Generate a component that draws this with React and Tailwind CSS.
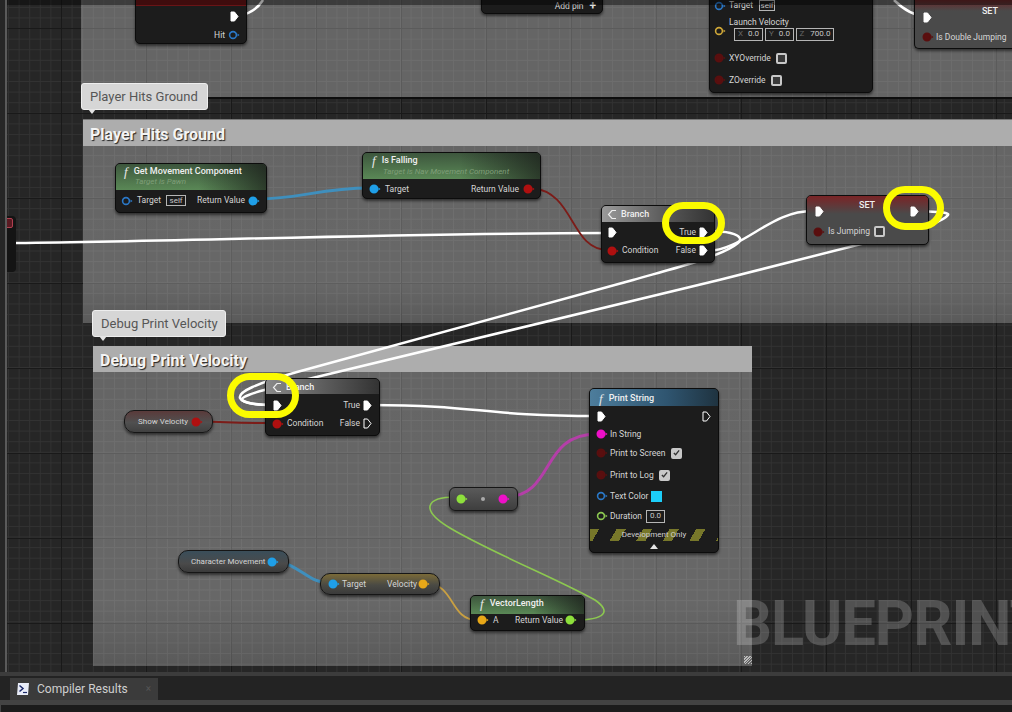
import React from 'react'

const grid =
  '[background-image:linear-gradient(90deg,#191919_1px,transparent_1px),linear-gradient(0deg,#191919_1px,transparent_1px),linear-gradient(90deg,#323232_1px,transparent_1px),linear-gradient(0deg,#323232_1px,transparent_1px)] [background-size:85px_85px,85px_85px,10.6px_10.6px,10.6px_10.6px] [background-position:59px_0,0_29px,59px_0,0_29px]'

function Exec({ hollow }) {
  return (
    <svg width="9" height="11" viewBox="0 0 9 11" className="shrink-0">
      <path d="M1 1h3.5L8 5.5 4.500 10H1z" fill={hollow ? 'none' : '#fff'} stroke="#fff" strokeWidth="1" />
    </svg>
  )
}

function Pin({ color, hollow }) {
  return (
    <svg width="12" height="10" viewBox="0 0 12 10" className="shrink-0">
      <circle cx="5" cy="5" r={hollow ? 3.4 : 3.7} fill={hollow ? 'none' : color} stroke={color} strokeWidth="1.6" />
      <path d="M9.500 3.500 11.500 5 9.500 6.500z" fill={color} />
    </svg>
  )
}

function Check({ on }) {
  return (
    <span className="flex h-[11px] w-[11px] shrink-0 items-center justify-center rounded-[2px] border-2 border-[#c8c8c8] bg-[#3a3a3a]">
      {on && (
        <svg width="8" height="8" viewBox="0 0 8 8" className="bg-[#c8c8c8]">
          <path d="M1 4l2 2 4-5" fill="none" stroke="#333" strokeWidth="1.5" />
        </svg>
      )}
    </span>
  )
}

function Field({ children, className = '' }) {
  return (
    <span className={`flex items-center justify-center border border-[#b5b5b5] text-[8px] leading-none text-[#c8c8c8] ${className}`}>
      {children}
    </span>
  )
}

function Fn({ className = '' }) {
  return <span className={`font-['Liberation_Serif',serif] text-[13px] italic leading-none text-[#e8e8e8] ${className}`}>f</span>
}

function BranchIcon() {
  return (
    <svg width="11" height="11" viewBox="0 0 11 11" className="shrink-0">
      <path d="M9 1.500H5L1.500 5.500 5 9.500H9" fill="none" stroke="#eee" strokeWidth="1.2" />
    </svg>
  )
}

function Row({ children, className = '' }) {
  return <div className={`flex items-center text-[8.500px] leading-none text-[#d5d5d5] ${className}`}>{children}</div>
}

const nodeBase =
  "absolute overflow-hidden rounded-[5px] border border-[#0c0c0c] bg-[#1c1c1c] font-['Roboto',sans-serif] shadow-[0_2px_3px_rgba(0,0,0,0.55)]"
const pureBase =
  "absolute flex items-center overflow-hidden border border-[#161616] font-['Roboto',sans-serif] shadow-[0_2px_3px_rgba(0,0,0,0.55)]"
const titleText = 'text-[9px] font-medium leading-none text-[#f0f0f0]'

function Comment({ className, title }) {
  return (
    <div className={`absolute bg-[linear-gradient(180deg,rgba(255,255,255,0.29),rgba(255,255,255,0.3)_80%,rgba(255,255,255,0.24))] ${className}`}>
      <div className="flex h-[26px] items-center bg-[#adadad] pl-[7px] pt-[3px] font-['Roboto',sans-serif] text-[16px] font-bold text-[#f4f4f4] [text-shadow:1px_1px_1px_#222]">
        {title}
      </div>
    </div>
  )
}

function Bubble({ className, children }) {
  return (
    <div className={`absolute flex h-[27px] items-center rounded-[3px] border border-[#eeeeee] bg-[#d6d6d6] pl-[8px] font-['Roboto',sans-serif] text-[13px] text-[#565656] ${className}`}>
      {children}
      <span className="absolute left-[6px] top-[25px] h-0 w-0 border-x-[4px] border-t-[5px] border-x-transparent border-t-[#e4e4e4]" />
    </div>
  )
}

function Wires() {
  return (
    <svg className="absolute left-0 top-0" width="1012" height="672" viewBox="0 0 1012 672" fill="none">
      <path d="M238 16C250 14 258 8 263 0" stroke="#fff" strokeWidth="2.500" />
      <path d="M894 0C902 8 912 16 926 16" stroke="#fff" strokeWidth="2.500" />
      <path d="M16 243C200 241 400 233 606 233" stroke="#fff" strokeWidth="2.500" />
      <path d="M258 199C300 199 320 188 370 188" stroke="#3f8fbd" strokeWidth="3" />
      <path d="M532 188C575 192 570 250 608 250" stroke="#7c1c18" strokeWidth="1.800" />
      <path d="M707 232C730 230 746 236 738 243C720 258 660 272 633 280L297 372C255 384 238 392 240 398C242 403 258 405 274 405" stroke="#fff" strokeWidth="2.500" />
      <path d="M707 251C745 250 770 210 814 211" stroke="#fff" strokeWidth="2.500" />
      <path d="M918 211C935 212 950 212 948 215C942 224 900 234 885 238L719 280L300 381C262 390 240 396 242 400C246 404 258 405 274 405" stroke="#fff" strokeWidth="2.500" />
      <path d="M200 421C230 423 250 423 275 423" stroke="#7c1c18" strokeWidth="2" />
      <path d="M371 405C480 405 480 416 597 416" stroke="#fff" strokeWidth="2.500" />
      <path d="M507 497C555 495 540 434 597 434" stroke="#b43fa8" strokeWidth="3" />
      <path d="M456 497C425 497 420 510 450 528C490 552 560 580 595 600C612 612 605 620 574 620" stroke="#8cc850" strokeWidth="1.600" />
      <path d="M278 561C300 566 310 583 328 583" stroke="#3f8fbd" strokeWidth="3" />
      <path d="M427 583C455 585 450 620 477 620" stroke="#c9a042" strokeWidth="1.800" />
    </svg>
  )
}

function GreenHead({ children, className = '' }) {
  return (
    <div className={`bg-[linear-gradient(90deg,transparent_55%,rgba(20,20,20,0.65)),linear-gradient(180deg,#3d563d,#5a8856)] ${className}`}>
      {children}
    </div>
  )
}

function Nodes() {
  return (
    <>
      {/* left edge node, mostly off screen */}
      <div className="absolute left-[6px] top-[216px] h-[56px] w-[10px] rounded-r-[4px] bg-[#141414]" />
      <div className="absolute left-[5px] top-[218px] h-[10px] w-[8px] rounded-[2px] border border-[#b04050] bg-[#5a1a22]" />

      {/* top row, cut by the window */}
      <div className={`${nodeBase} left-[135px] top-[-20px] h-[64px] w-[112px]`}>
        <div className="h-[25px] bg-[#6a1416]" />
        <Row className="mt-[5px] justify-end pr-[7px]"><Exec /></Row>
        <Row className="mt-[8px] justify-end gap-[3px] pr-[6px]">Hit <Pin color="#2a78c8" hollow /></Row>
      </div>
      <div className={`${nodeBase} left-[481px] top-[-20px] h-[34px] w-[122px]`}>
        <Row className="mt-[21px] justify-end gap-[6px] pr-[6px] text-[#aaa]">
          Add pin <span className="text-[12px] font-bold leading-[8px] text-[#ddd]">+</span>
        </Row>
      </div>
      <div className={`${nodeBase} left-[709px] top-[-10px] h-[103px] w-[164px] pl-[4px]`}>
        <Row className="mt-[9px] gap-[3px] text-[#aaa]"><Pin color="#2a78c8" hollow />Target <Field className="ml-[3px] h-[11px] w-[16px] text-[7px]">self</Field></Row>
        <Row className="ml-[15px] mt-[7px]">Launch Velocity</Row>
        <Row className="mt-[1px]">
          <span className="mr-[8px] -translate-y-[3px]"><Pin color="#d0a838" hollow /></span>
          <span className="flex gap-[2px]">
            <Field className="h-[13px] w-[29px] gap-[5px]"><i className="not-italic text-[#666]">X</i>0.0</Field>
            <Field className="h-[13px] w-[29px] gap-[5px]"><i className="not-italic text-[#666]">Y</i>0.0</Field>
            <Field className="h-[13px] w-[38px] gap-[6px]"><i className="not-italic text-[#666]">Z</i>700.0</Field>
          </span>
        </Row>
        <Row className="mt-[12px] gap-[3px]"><Pin color="#5a0f0f" />XYOverride <span className="ml-[2px]"><Check /></span></Row>
        <Row className="mt-[11px] gap-[3px]"><Pin color="#5a0f0f" />ZOverride <span className="ml-[2px]"><Check /></span></Row>
      </div>
      <div className={`${nodeBase} left-[914px] top-[-20px] h-[69px] w-[110px] rounded-r-none border-r-0 bg-[#4a4a4a]`}>
        <div className="h-[30px] bg-[linear-gradient(180deg,#6c2426_60%,#4a4a4a)]" />
        <div className="flex h-[19px] items-start justify-between pl-[8px] pr-[26px] text-[9px] font-medium leading-none text-[#eee]">
          <span className="mt-[1px]"><Exec /></span><span className="-translate-y-[4px]">SET</span>
        </div>
        <Row className="mt-[2px] gap-[2px] pl-[7px]"><Pin color="#5a0f0f" />Is Double Jumping</Row>
      </div>

      {/* Player Hits Ground */}
      <div className={`${nodeBase} left-[115px] top-[163px] h-[50px] w-[152px]`}>
        <GreenHead className="h-[26px] pl-[8px] pt-[1px]">
          <div className="flex items-center gap-[6px]"><Fn /><span className={titleText}>Get Movement Component</span></div>
          <div className="ml-[11px] text-[8px] italic leading-none text-[#7f9f78]">Target is Pawn</div>
        </GreenHead>
        <Row className="justify-between pl-[5px] pr-[6px] pt-[5px]">
          <span className="flex items-center gap-[4px]"><Pin color="#2a78c8" hollow />Target <Field className="ml-[1px] h-[11px] w-[20px]">self</Field></span>
          <span className="flex items-center gap-[3px]">Return Value <Pin color="#1f9fe8" /></span>
        </Row>
      </div>
      <div className={`${nodeBase} left-[362px] top-[152px] h-[47px] w-[179px]`}>
        <GreenHead className="h-[26px] pl-[9px] pt-[1px]">
          <div className="flex items-center gap-[6px]"><Fn /><span className={titleText}>Is Falling</span></div>
          <div className="ml-[11px] mt-[1px] text-[8px] italic leading-none text-[#7f9f78]">Target is Nav Movement Component</div>
        </GreenHead>
        <Row className="justify-between pl-[6px] pr-[5px] pt-[5px]">
          <span className="flex items-center gap-[4px]"><Pin color="#1f9fe8" />Target</span>
          <span className="flex items-center gap-[4px]">Return Value <Pin color="#b01010" /></span>
        </Row>
      </div>
      <div className={`${nodeBase} left-[601px] top-[205px] h-[58px] w-[114px]`}>
        <div className="flex h-[16px] items-center gap-[3px] bg-[linear-gradient(90deg,#9a9a9a,#555_60%,#333)] pl-[5px]">
          <BranchIcon /><span className={titleText}>Branch</span>
        </div>
        <Row className="justify-between pl-[6px] pr-[6px] pt-[5px]"><Exec /><span className="flex items-center gap-[3px]">True <Exec /></span></Row>
        <Row className="justify-between pl-[5px] pr-[6px] pt-[7px]">
          <span className="flex items-center gap-[3px]"><Pin color="#b01010" />Condition</span>
          <span className="flex items-center gap-[3px]">False <Exec /></span>
        </Row>
      </div>
      <div className={`${nodeBase} left-[806px] top-[195px] h-[50px] w-[123px] bg-[#4a4a4a]`}>
        <div className="absolute left-0 right-0 top-0 h-[18px] bg-[linear-gradient(180deg,#7a2426,#4a4a4a)]" />
        <div className="relative flex justify-between pl-[8px] pr-[9px] pt-[10px]">
          <Exec /><span className="absolute left-[52px] top-[5px] text-[9px] font-medium leading-none text-[#eee]">SET</span><Exec />
        </div>
        <Row className="relative gap-[3px] pl-[6px] pt-[9px]"><Pin color="#5a0f0f" />Is Jumping <span className="ml-[1px]"><Check /></span></Row>
      </div>

      {/* Debug Print Velocity */}
      <div className={`${pureBase} left-[124px] top-[410px] h-[23px] w-[89px] justify-between rounded-[10px] bg-[linear-gradient(180deg,#5a3a3a,#505050_55%,#404040)] pl-[13px] pr-[9px]`}>
        <span className="text-[8px] text-[#d5d5d5]">Show Velocity</span><Pin color="#b01010" />
      </div>
      <div className={`${nodeBase} left-[265px] top-[378px] h-[58px] w-[115px]`}>
        <div className="flex h-[15px] items-center gap-[3px] bg-[linear-gradient(90deg,#8a8a8a,#555_60%,#333)] pl-[6px] pt-[1px]">
          <BranchIcon /><span className={titleText}>Branch</span>
        </div>
        <Row className="justify-between pl-[7px] pr-[7px] pt-[6px]"><Exec /><span className="flex items-center gap-[3px]">True <Exec /></span></Row>
        <Row className="justify-between pl-[6px] pr-[7px] pt-[7px]">
          <span className="flex items-center gap-[3px]"><Pin color="#b01010" />Condition</span>
          <span className="flex items-center gap-[3px]">False <Exec hollow /></span>
        </Row>
      </div>
      <div className={`${nodeBase} left-[589px] top-[388px] h-[165px] w-[130px]`}>
        <div className="flex h-[17px] items-center gap-[6px] bg-[linear-gradient(90deg,#4d7d9c,#2f5570_60%,#1f3340)] pl-[9px] pt-[1px]">
          <Fn /><span className={titleText}>Print String</span>
        </div>
        <Row className="justify-between pl-[7px] pr-[7px] pt-[5px]"><Exec /><Exec hollow /></Row>
        <div className="mt-[7px] flex flex-col pl-[6px]">
          <Row className="h-[10px] gap-[2px]"><Pin color="#ee10c8" />In String</Row>
          <Row className="mt-[9px] h-[10px] gap-[2px]"><Pin color="#5a0f0f" />Print to Screen <span className="ml-[3px]"><Check on /></span></Row>
          <Row className="mt-[12px] h-[10px] gap-[2px]"><Pin color="#5a0f0f" />Print to Log <span className="ml-[3px]"><Check on /></span></Row>
          <Row className="mt-[11px] h-[10px] gap-[2px]"><Pin color="#2a78c8" hollow />Text Color <span className="ml-px h-[11px] w-[11px] bg-[#1ccdf8]" /></Row>
          <Row className="mt-[10px] h-[10px] gap-[2px]"><Pin color="#8cc850" hollow />Duration <Field className="ml-[2px] h-[13px] w-[19px]">0.0</Field></Row>
        </div>
        <div className="mt-[8px] flex h-[12px] items-center justify-center bg-[repeating-linear-gradient(120deg,#77772a_0_8px,#1c1c1c_8px_23px)] text-[8px] text-[#d0d0d0]">
          Development Only
        </div>
        <div className="mx-auto mt-[3px] h-0 w-0 border-x-[4px] border-b-[5px] border-x-transparent border-b-[#e5e5e5]" />
      </div>
      <div className={`${pureBase} left-[449px] top-[487px] h-[24px] w-[69px] justify-between rounded-[6px] bg-[linear-gradient(180deg,#5a5a5a,#3e3e3e)] pl-[6px] pr-[7px]`}>
        <Pin color="#8ee03c" />
        <span className="h-[4px] w-[4px] rounded-full bg-[#aaa]" />
        <Pin color="#ee10c8" />
      </div>
      <div className={`${pureBase} left-[178px] top-[550px] h-[23px] w-[111px] justify-between rounded-[10px] bg-[linear-gradient(180deg,#3a4e5a,#4a4a4a_60%,#3a3a3a)] pl-[12px] pr-[9px]`}>
        <span className="text-[8px] text-[#d5d5d5]">Character Movement</span><Pin color="#1f9fe8" />
      </div>
      <div className={`${pureBase} left-[320px] top-[573px] h-[22px] w-[120px] justify-between rounded-[10px] bg-[linear-gradient(180deg,#7a6a38,#4a4a44_55%,#3a3a3a)] pl-[7px] pr-[9px]`}>
        <span className="flex items-center gap-[2px] text-[8.500px] text-[#d5d5d5]"><Pin color="#1f9fe8" />Target</span>
        <span className="flex items-center gap-[1px] text-[8.500px] text-[#d5d5d5]">Velocity <Pin color="#e8a818" /></span>
      </div>
      <div className={`${nodeBase} left-[470px] top-[595px] h-[36px] w-[115px]`}>
        <GreenHead className="flex h-[18px] items-center gap-[6px] pb-[3px] pl-[9px]"><Fn /><span className={titleText}>VectorLength</span></GreenHead>
        <Row className="justify-between pl-[6px] pr-[7px] pt-[1px]">
          <span className="flex items-center gap-[4px]"><Pin color="#e8a818" />A</span>
          <span className="flex items-center gap-[2px]">Return Value <Pin color="#8ee03c" /></span>
        </Row>
      </div>
    </>
  )
}

export default function App() {
  return (
    <div className="flex h-[712px] w-[1012px] flex-col overflow-hidden bg-[#262626]">
      <div className="relative ml-[5px] h-[672px] w-full shrink-0 overflow-hidden border-l-2 border-[#5a5a5a] bg-[#262626]">
        <div className={`absolute inset-0 left-[-5px] ${grid}`} />
        <div className="absolute inset-0 left-[-7px] w-[1012px]">
          <div className="absolute left-[81px] top-0 h-[97px] w-[931px] bg-white/[0.29] shadow-[0_2px_0_#0e0e0e]" />
          <Comment className="left-[83px] top-[120px] h-[203px] w-[929px] shadow-[0_-1px_0_#777]" title="Player Hits Ground" />
          <Comment className="left-[93px] top-[346px] h-[320px] w-[659px]" title="Debug Print Velocity" />
          <Bubble className="left-[81px] top-[83px] w-[127px]">Player Hits Ground</Bubble>
          <Bubble className="left-[92px] top-[310px] w-[134px]">Debug Print Velocity</Bubble>
          <div className="absolute left-[733px] top-[592px] origin-left scale-x-[0.97] whitespace-nowrap font-['Roboto',sans-serif] text-[63px] font-bold leading-none tracking-[-1px] text-white/[0.2]">
            BLUEPRINT
          </div>
          <Wires />
          <Nodes />
          {/* comment box resize grip */}
          <div className="absolute left-[744px] top-[656px] h-[8px] w-[8px] bg-[repeating-linear-gradient(135deg,#bbb_0_1px,#666_1px_2px)]" />
          <div className="absolute left-0 right-0 top-0 h-[5px] bg-black/40" />
          <div className="absolute left-[662px] top-[202px] h-[42px] w-[63px] rounded-[22px] border-[7px] border-[#fbfb00]" />
          <div className="absolute left-[883px] top-[186px] h-[44px] w-[61px] rounded-[22px] border-[7px] border-[#fbfb00]" />
          <div className="absolute left-[227px] top-[373px] h-[45px] w-[72px] rounded-[24px] border-[7px] border-[#fbfb00]" />
        </div>
      </div>

      {/* Tab bar */}
      <div className="relative flex h-[40px] shrink-0 flex-col border-t-[4px] border-[#3c3c3c] bg-[#232323]">
        <div className="ml-[10px] mt-[2px] flex h-[22px] w-[148px] items-center bg-[#3b3b3b] pl-[7px] pr-[7px] font-['Roboto',sans-serif] text-[12px] text-[#cfcfcf]">
          <svg width="13" height="14" viewBox="0 0 13 14" className="shrink-0">
            <path d="M1 1h11l-1 12H0z" fill="#e8ecf8" />
            <path d="M2.500 3.500 6 6.500 2.500 9.500" fill="none" stroke="#1c2a6a" strokeWidth="1.500" />
            <path d="M6 10.500h4" stroke="#1c2a6a" strokeWidth="1.200" />
          </svg>
          <span className="ml-[7px]">Compiler Results</span>
          <span className="ml-auto text-[10px] leading-none text-[#555]">×</span>
        </div>
        <div className="h-[5px] bg-[#434343]" />
        <div className="flex-1 border-l border-[#444] bg-[#1c1c1c]" />
      </div>
    </div>
  )
}
